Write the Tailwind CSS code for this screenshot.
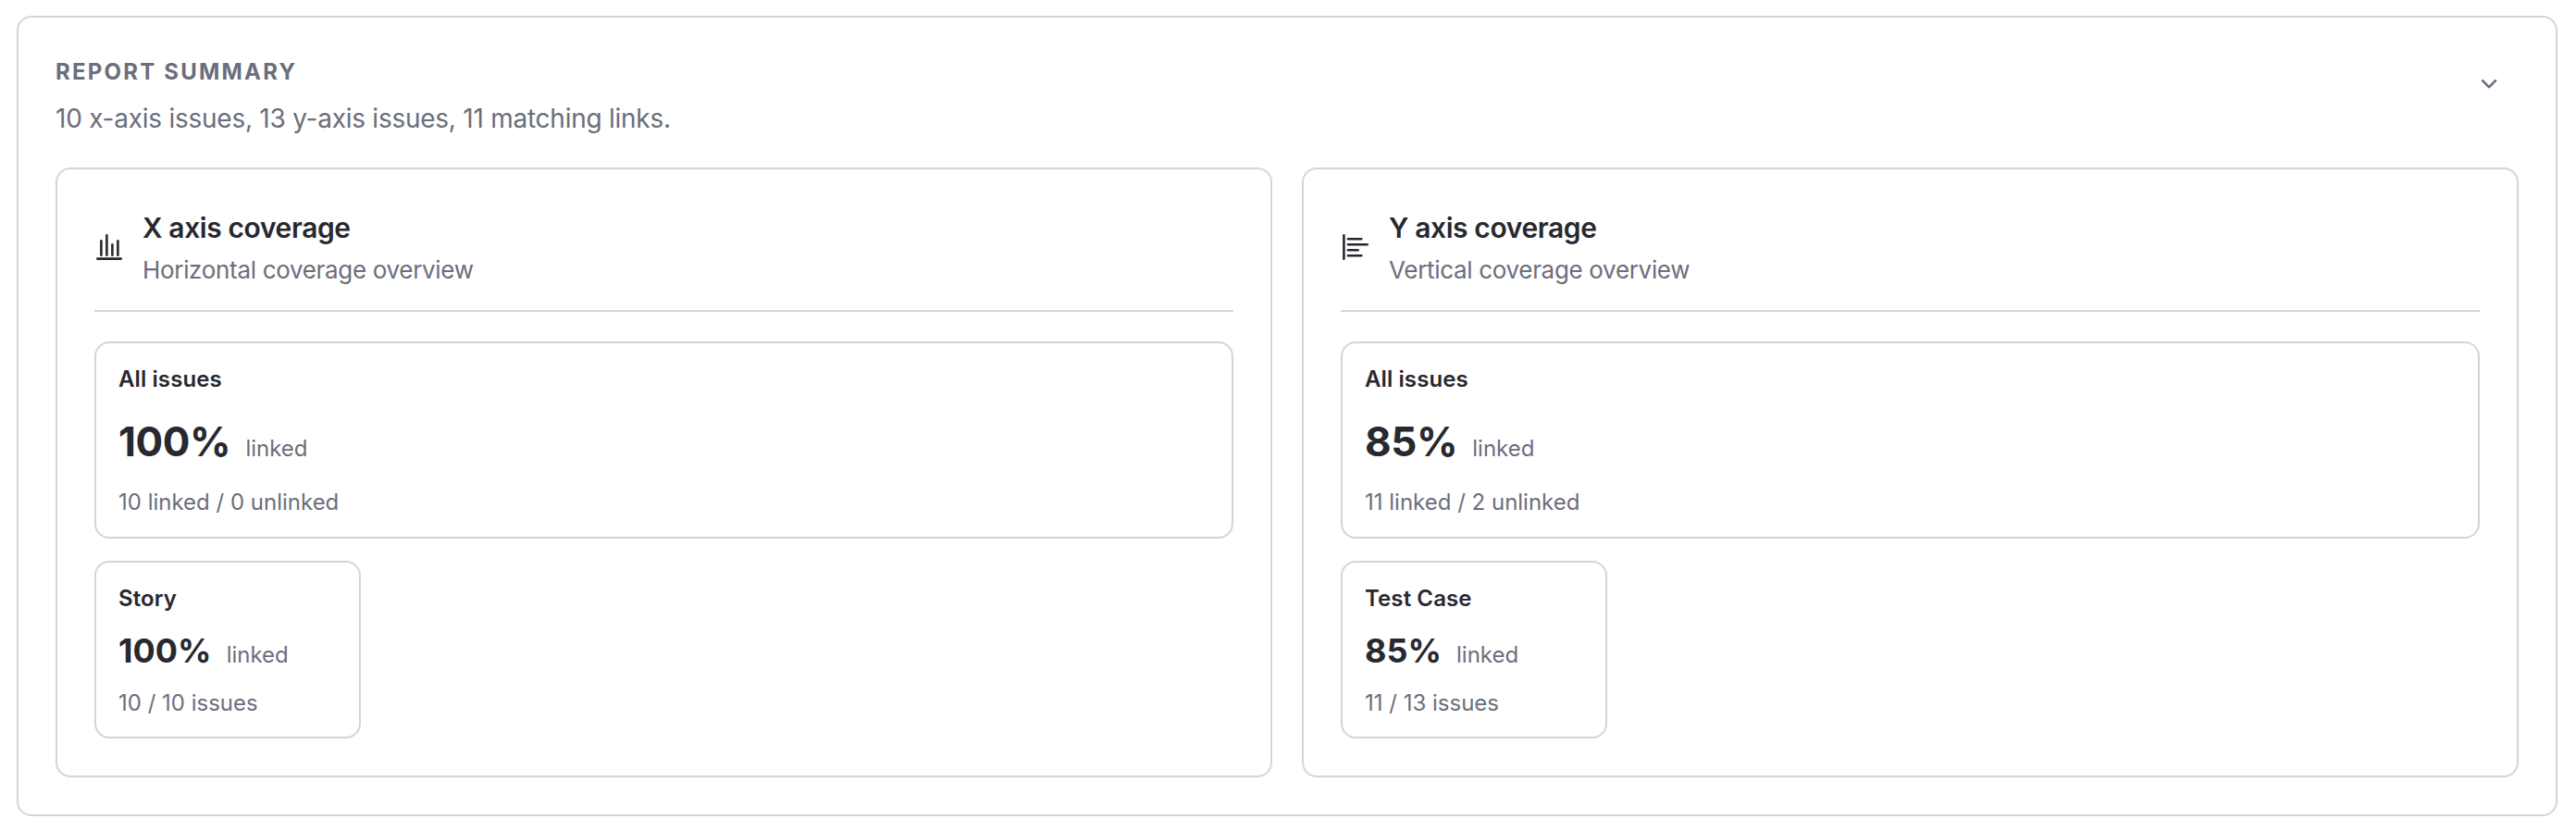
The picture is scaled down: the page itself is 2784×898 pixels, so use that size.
<!DOCTYPE html>
<html lang="en">
<head>
    <meta charset="UTF-8">
    <meta name="viewport" content="width=device-width, initial-scale=1.0">
    <title>Report Summary</title>
    <script src="https://cdn.jsdelivr.net/npm/@tailwindcss/browser@4"></script>
</head>
<body class="bg-white font-['Inter','Liberation_Sans',sans-serif] text-[#28282f] antialiased">
    <main class="pt-[17px] pl-[18px] pr-5">
        <section class="border-2 border-[#d4d4db] rounded-2xl p-10">
            <!-- Summary header -->
            <header class="flex justify-between items-start mb-8">
                <div>
                    <h2 class="pt-px text-2xl leading-9 font-bold tracking-[2.2px] uppercase text-[#6b6e7b]">Report summary</h2>
                    <p class="mt-[11px] text-[28px] leading-[42px] tracking-[-0.25px] text-[#6b6e7b]">10 x-axis issues, 13 y-axis issues, 11 matching links.</p>
                </div>
                <button class="size-16 flex items-center justify-center text-[#6b6e7b]" aria-label="Collapse">
                    <svg class="size-8" viewBox="0 0 32 32" fill="none" stroke="currentColor" stroke-width="2.6" stroke-linecap="round" stroke-linejoin="round">
                        <path d="M9 12.2l7 7 7-7"/>
                    </svg>
                </button>
            </header>

            <div class="grid grid-cols-2 gap-8">
                <!-- X axis -->
                <article class="border-2 border-[#d4d4db] rounded-2xl p-10">
                    <div class="flex items-center gap-5 pb-6 border-b-2 border-[#d4d4db]">
                        <svg class="size-8 shrink-0" viewBox="0 0 32 32" fill="none" stroke="currentColor" stroke-width="2.6" stroke-linecap="round">
                            <path d="M7.4 9.3v15.4M13.4 3.3v21.4M19.4 13.3v11.4M25.4 9.3v15.4M3.3 28.6h25.4"/>
                        </svg>
                        <div>
                            <h3 class="pt-px text-[30px] leading-[45px] font-semibold tracking-[-0.4px]">X axis coverage</h3>
                            <p class="mt-[3px] text-[26px] leading-[39px] tracking-[-0.32px] text-[#6b6e7b]">Horizontal coverage overview</p>
                        </div>
                    </div>
                    <div class="mt-8 h-[213px] border-2 border-[#d4d4db] rounded-2xl p-6">
                        <h4 class="text-2xl leading-[29px] font-semibold tracking-[0.1px]">All issues</h4>
                        <div class="mt-[26px] flex items-baseline gap-4">
                            <span class="text-[44px] leading-[55px] font-bold tracking-[-0.4px]">100%</span>
                            <span class="text-2xl leading-[29px] text-[#6b6e7b]">linked</span>
                        </div>
                        <p class="mt-[23px] text-2xl leading-[29px] text-[#6b6e7b]">10 linked / 0 unlinked</p>
                    </div>
                    <div class="mt-6 h-48 w-72 border-2 border-[#d4d4db] rounded-2xl p-6">
                        <h4 class="text-2xl leading-[29px] font-semibold tracking-[0.1px]">Story</h4>
                        <div class="mt-5 flex items-baseline gap-4">
                            <span class="text-4xl leading-[44px] font-bold">100%</span>
                            <span class="text-2xl leading-[29px] text-[#6b6e7b]">linked</span>
                        </div>
                        <p class="mt-5 text-2xl leading-[29px] text-[#6b6e7b]">10 / 10 issues</p>
                    </div>
                </article>

                <!-- Y axis -->
                <article class="border-2 border-[#d4d4db] rounded-2xl p-10">
                    <div class="flex items-center gap-5 pb-6 border-b-2 border-[#d4d4db]">
                        <svg class="size-8 shrink-0" viewBox="0 0 32 32" fill="none" stroke="currentColor" stroke-width="2.6" stroke-linecap="round">
                            <path d="M3.4 3.3v25.4M7.9 7.3h14.4M7.9 13.3h20.8M7.9 19.3h10.8M7.9 25.3h14.4"/>
                        </svg>
                        <div>
                            <h3 class="pt-px text-[30px] leading-[45px] font-semibold tracking-[-0.4px]">Y axis coverage</h3>
                            <p class="mt-[3px] text-[26px] leading-[39px] tracking-[-0.32px] text-[#6b6e7b]">Vertical coverage overview</p>
                        </div>
                    </div>
                    <div class="mt-8 h-[213px] border-2 border-[#d4d4db] rounded-2xl p-6">
                        <h4 class="text-2xl leading-[29px] font-semibold tracking-[0.1px]">All issues</h4>
                        <div class="mt-[26px] flex items-baseline gap-4">
                            <span class="text-[44px] leading-[55px] font-bold tracking-[-0.4px]">85%</span>
                            <span class="text-2xl leading-[29px] text-[#6b6e7b]">linked</span>
                        </div>
                        <p class="mt-[23px] text-2xl leading-[29px] text-[#6b6e7b]">11 linked / 2 unlinked</p>
                    </div>
                    <div class="mt-6 h-48 w-72 border-2 border-[#d4d4db] rounded-2xl p-6">
                        <h4 class="text-2xl leading-[29px] font-semibold tracking-[0.1px]">Test Case</h4>
                        <div class="mt-5 flex items-baseline gap-4">
                            <span class="text-4xl leading-[44px] font-bold">85%</span>
                            <span class="text-2xl leading-[29px] text-[#6b6e7b]">linked</span>
                        </div>
                        <p class="mt-5 text-2xl leading-[29px] text-[#6b6e7b]">11 / 13 issues</p>
                    </div>
                </article>
            </div>
        </section>
    </main>
</body>
</html>
